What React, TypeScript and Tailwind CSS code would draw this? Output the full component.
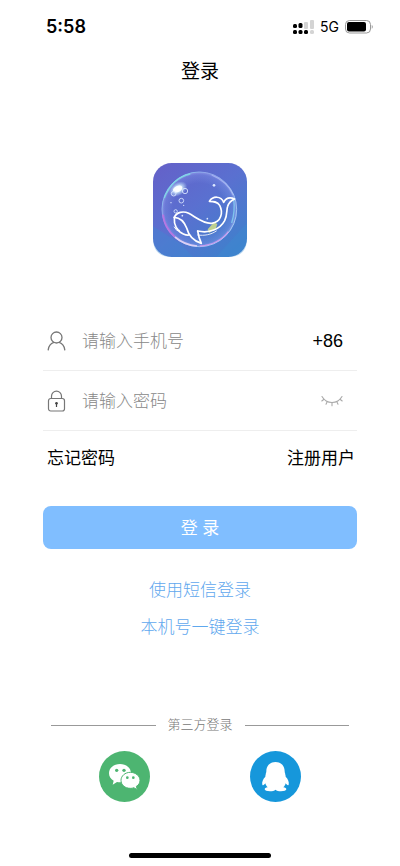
import { useState } from "react";
import type { FormEvent } from "react";

const SignalIcon = () => (
  <svg width="21" height="15" viewBox="0 0 21 15" aria-hidden="true">
    <rect x="0" y="4" width="4" height="4" rx="1.5" fill="#000" />
    <rect x="5.5" y="3" width="4" height="5" rx="1.5" fill="#000" />
    <rect x="11" y="2" width="4" height="7" rx="1" fill="#d4d4d4" />
    <rect x="17" y="0" width="4" height="9" rx="1" fill="#d4d4d4" />
    <rect x="0" y="10" width="4" height="4" rx="1.5" fill="#000" />
    <rect x="5.5" y="10" width="4" height="4" rx="1.5" fill="#000" />
    <rect x="11" y="10" width="4" height="4" rx="1.5" fill="#000" />
    <rect x="17" y="10" width="4" height="4" rx="1.5" fill="#d4d4d4" />
  </svg>
);

const BatteryIcon = () => (
  <svg width="28" height="14" viewBox="0 0 28 14" aria-hidden="true">
    <rect x="0.5" y="0.5" width="25" height="12.5" rx="4" fill="none" stroke="#999" />
    <rect x="2" y="2" width="19" height="9.5" rx="2" fill="#000" />
    <path d="M26.8 5c1.1.4 1.1 3.2 0 3.7z" fill="#777" />
  </svg>
);

const WhaleLogo = () => (
  <svg viewBox="0 0 282 282" className="size-[94px]" role="img" aria-label="logo">
    <defs>
      <linearGradient id="sea" x1="0" y1="0" x2="0.8" y2="1">
        <stop offset="0" stopColor="#6560c8" />
        <stop offset="0.5" stopColor="#5a70d0" />
        <stop offset="1" stopColor="#3f80cc" />
      </linearGradient>
      <linearGradient id="rim" x1="0" y1="0" x2="1" y2="1">
        <stop offset="0" stopColor="#7fe0f0" />
        <stop offset="0.3" stopColor="#8fa4ea" />
        <stop offset="0.6" stopColor="#8fb4ee" />
        <stop offset="1" stopColor="#b8dcf8" />
      </linearGradient>
      <radialGradient id="bubble">
        <stop offset="0.7" stopColor="#8aa4f0" stopOpacity="0" />
        <stop offset="0.92" stopColor="#8a9cee" stopOpacity="0.3" />
        <stop offset="1" stopColor="#b0b8fa" stopOpacity="0.55" />
      </radialGradient>
      <radialGradient id="glow">
        <stop offset="0" stopColor="#fff" />
        <stop offset="0.4" stopColor="#d8f2fc" stopOpacity="0.9" />
        <stop offset="1" stopColor="#b8dcf8" stopOpacity="0" />
      </radialGradient>
    </defs>
    <rect width="282" height="282" rx="56" fill="url(#sea)" />
    <path d="M0 190L80 240L120 282H56Q0 282 0 226zM190 282L282 180V226Q282 282 226 282z" fill="#3c8bd0" opacity="0.35" />
    <circle cx="139" cy="139" r="112" fill="url(#bubble)" stroke="url(#rim)" strokeWidth="3" />
    <path d="M34 105Q58 45 112 33" fill="none" stroke="#7ff0e6" strokeWidth="4" opacity="0.65" />
    <path d="M176 36Q224 56 241 97" fill="none" stroke="#cbd4ff" strokeWidth="4" opacity="0.5" />
    <path d="M30 155Q34 195 66 222" fill="none" stroke="#c56be0" strokeWidth="6" opacity="0.75" />
    <path d="M66 222Q94 246 132 249" fill="none" stroke="#f3d9f8" strokeWidth="5" opacity="0.8" />
    <path d="M140 249Q196 246 226 206" fill="none" stroke="#d79af0" strokeWidth="4" opacity="0.8" />
    <path d="M236 180Q247 145 242 108" fill="none" stroke="#8be0f5" strokeWidth="4" opacity="0.7" />
    <path d="M164 199L183 178L193 183L188 198L168 210z" fill="#dbe681" opacity="0.8" />
    <ellipse cx="75" cy="78" rx="30" ry="20" fill="url(#glow)" transform="rotate(-32 75 78)" />
    <ellipse cx="74" cy="78" rx="15" ry="9" fill="#fff" opacity="0.9" transform="rotate(-25 74 78)" />
    <g fill="none" stroke="#dce8ff" strokeWidth="2.5">
      <circle cx="62" cy="92" r="7" />
      <circle cx="96" cy="84" r="8" />
      <circle cx="85" cy="113" r="7" />
      <circle cx="68" cy="145" r="5" />
    </g>
    <g fill="#dce8ff">
      <circle cx="54" cy="119" r="2" />
      <circle cx="92" cy="127" r="2" />
      <circle cx="183" cy="67" r="4" />
      <circle cx="163" cy="167" r="2.5" />
      <circle cx="88" cy="158" r="2.5" />
    </g>
    <g fill="none" stroke="#fff" strokeWidth="5" strokeLinecap="round" strokeLinejoin="round">
      <path d="M64 163C70 147 91 143 107 151C128 162 151 183 176 181C205 178 211 148 200 127C193 115 181 115 169 115C179 99 204 97 212 118C219 104 233 103 245 108C235 112 228 118 224 130C220 139 224 155 215 173C201 199 169 212 134 204" />
      <path d="M64 163C62 185 72 205 91 213C98 216 104 217 108 216" />
      <path d="M64 163C82 164 94 177 101 195C106 215 116 232 145 241C139 228 136 217 134 204" />
      <path d="M64 192L72 203L80 202" strokeWidth="3" />
      <path d="M134 216C154 219 174 215 190 204" strokeWidth="2.5" />
    </g>
  </svg>
);

const UserIcon = () => (
  <svg width="19" height="20" viewBox="0 0 19 20" fill="none" stroke="#777" strokeWidth="1.3" strokeLinecap="round" aria-hidden="true">
    <circle cx="9.5" cy="6.5" r="5.5" />
    <path d="M1.2 18.8C1.7 15 4 12.4 6.8 11.4M12.2 11.4C15 12.4 17.3 15 17.8 18.8" />
  </svg>
);

const LockIcon = () => (
  <svg width="19" height="22" viewBox="0 0 19 22" fill="none" stroke="#777" strokeWidth="1.2" aria-hidden="true">
    <rect x="1.5" y="8.5" width="16" height="12.5" rx="2.2" />
    <path d="M4.5 8.5V6.2a5 5 0 0 1 10 0v2.3" />
    <path d="M9.5 14v3" stroke="#444" strokeWidth="1.2" />
    <circle cx="9.5" cy="13.3" r="1.3" fill="#444" stroke="none" />
  </svg>
);

const ClosedEyeIcon = () => (
  <svg width="22" height="12" viewBox="0 0 22 12" fill="none" stroke="#aaa" strokeWidth="1.1" strokeLinecap="round" aria-hidden="true">
    <path d="M1 1.5C5.5 9.5 16.5 9.5 21 1.5" />
    <path d="M3 4.3L.8 6M6.3 6.6L5 9.3M11 7.7v3M15.7 6.6L17 9.3M19 4.3L21.2 6" />
  </svg>
);

const WechatIcon = () => (
  <svg viewBox="0 0 153 153" className="size-[51px]" aria-hidden="true">
    <circle cx="76.5" cy="76.5" r="76.5" fill="#4db571" />
    <path d="M63 39C44 39 30 51 30 67C30 77 35 84 44 89L41 101L54 93C57 94 60 94 64 94C82 94 96 82 96 67C96 51 82 39 63 39z" fill="#fff" />
    <path d="M94 64C78 64 66 75 66 88C66 102 78 112 94 112C98 112 101 112 104 110L115 116L112 106C119 102 123 96 123 88C123 75 110 64 94 64z" fill="#fff" stroke="#4db571" strokeWidth="3" />
    <g fill="#4db571">
      <circle cx="53" cy="58" r="5" />
      <circle cx="75" cy="58" r="5" />
      <circle cx="85" cy="80" r="4" />
      <circle cx="103" cy="80" r="4" />
    </g>
  </svg>
);

const QQIcon = () => (
  <svg viewBox="0 0 153 153" className="size-[51px]" aria-hidden="true">
    <circle cx="76.5" cy="76.5" r="76.5" fill="#1697db" />
    <path
      d="M76.5 33C58 33 49 46 49 61C49 65 47 67 47 71C46 73 46 75 46 77C39 84 35 93 37 101C39 105 43 101 46 97C47 102 50 106 53 109C47 110 44 112 44 115C44 119 51 121 60 121C67 121 73 119 76.5 116C80 119 86 121 93 121C102 121 109 119 109 115C109 112 106 110 100 109C103 106 106 102 107 97C110 101 114 105 116 101C118 93 114 84 107 77C107 75 107 73 106 71C106 67 104 65 104 61C104 46 95 33 76.5 33z"
      fill="#fff"
    />
  </svg>
);

const App = () => {
  const [phone, setPhone] = useState("");
  const [password, setPassword] = useState("");
  const [showPassword, setShowPassword] = useState(false);

  const handleSubmit = (event: FormEvent) => {
    event.preventDefault();
  };

  return (
    <div className="min-h-screen flex flex-col bg-white text-black font-['Liberation_Sans','Noto_Sans_CJK_SC',sans-serif]">
      <div className="flex h-12 items-center justify-between pt-1.5 pr-[27px] pl-[46px]">
        <span className="font-['Inter',sans-serif] text-lg font-semibold">5:58</span>
        <div className="flex items-center gap-1.5">
          <SignalIcon />
          <span className="font-['Inter',sans-serif] text-sm">5G</span>
          <BatteryIcon />
        </div>
      </div>

      <header className="flex h-12 items-center justify-center">
        <h1 className="text-[19px]">登录</h1>
      </header>

      <main className="flex flex-1 flex-col px-[43px]">
        <div className="flex justify-center pt-[67px] pb-[54px]">
          <WhaleLogo />
        </div>

        <form onSubmit={handleSubmit}>
          <div className="flex h-[60px] items-center border-b border-[#eee] pr-3.5 pl-1">
            <label htmlFor="phone" aria-label="手机号">
              <UserIcon />
            </label>
            <input
              id="phone"
              type="tel"
              value={phone}
              onChange={(e) => setPhone(e.target.value)}
              placeholder="请输入手机号"
              className="ml-4 min-w-0 flex-1 pt-0.5 text-[17px] font-light outline-none placeholder:text-[#888]"
            />
            <button type="button" className="text-lg">
              +86
            </button>
          </div>

          <div className="flex h-[60px] items-center border-b border-[#eee] pr-3.5 pl-1">
            <label htmlFor="password" aria-label="密码">
              <LockIcon />
            </label>
            <input
              id="password"
              type={showPassword ? "text" : "password"}
              value={password}
              onChange={(e) => setPassword(e.target.value)}
              placeholder="请输入密码"
              className="ml-4 min-w-0 flex-1 pt-0.5 text-[17px] font-light outline-none placeholder:text-[#888]"
            />
            <button
              type="button"
              aria-label="显示密码"
              onClick={() => setShowPassword(!showPassword)}
            >
              <ClosedEyeIcon />
            </button>
          </div>

          <div className="flex h-[54px] items-center justify-between pt-0.5 pr-0.5 pl-1 text-[17px]">
            <a href="#forgot">忘记密码</a>
            <a href="#register">注册用户</a>
          </div>

          <button
            type="submit"
            className="mt-[21px] block h-[43px] w-full rounded-lg bg-[#80beff] pt-0.5 text-[17px] text-white"
          >
            登 录
          </button>
        </form>

        <div className="mt-[29px] flex flex-col items-center gap-[11px] text-[17px] leading-[26px] font-light text-[#5fa8ee]">
          <a href="#sms">使用短信登录</a>
          <a href="#one-key">本机号一键登录</a>
        </div>

        <div className="mt-[74px] flex items-center gap-3 px-2 text-[13px] leading-5 font-light text-[#777]">
          <span className="h-px flex-1 bg-[#999]" />
          <span>第三方登录</span>
          <span className="h-px flex-1 bg-[#999]" />
        </div>

        <div className="mt-4 flex justify-between px-14">
          <button type="button" aria-label="微信登录">
            <WechatIcon />
          </button>
          <button type="button" aria-label="QQ登录">
            <QQIcon />
          </button>
        </div>
      </main>

      <div className="flex justify-center pb-2">
        <div className="h-[5px] w-[142px] rounded-full bg-black" />
      </div>
    </div>
  );
};

export default App;
